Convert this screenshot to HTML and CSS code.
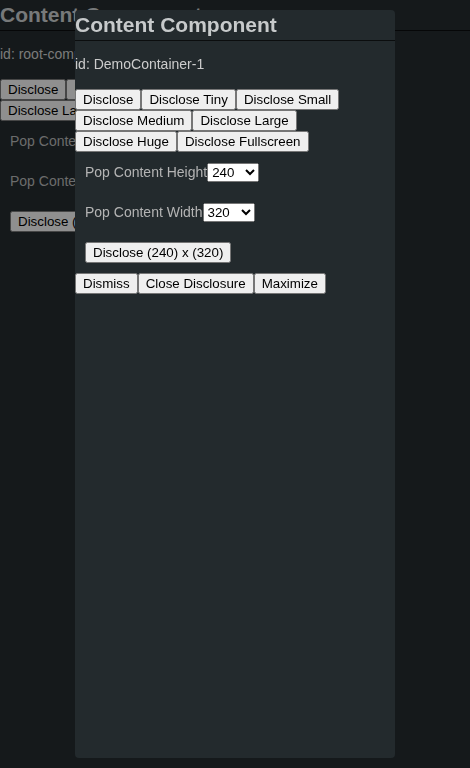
FILE: index.html
```html
<!DOCTYPE html>
<html>
<head>
<meta charset="utf-8">
<link rel="stylesheet" href="styles.css">
</head>
<body>
<div class="component">
  <h1 class="title">Content Component</h1>
  <p class="ident">id: root-component</p>
  <div class="buttons">
    <button>Disclose</button><button>Disclose Tiny</button><button>Disclose Small</button><button>Disclose Medium</button><button>Disclose Large</button><button>Disclose Huge</button><button>Disclose Fullscreen</button>
  </div>
  <div class="field"><span class="label">Pop Content Height</span><select><option>240</option><option>320</option><option>480</option></select></div>
  <div class="field"><span class="label">Pop Content Width</span><select><option>320</option><option>240</option><option>480</option></select></div>
  <div class="field"><button>Disclose (240) x (320)</button></div>
</div>
<div class="overlay">
  <div class="panel">
    <div class="component">
      <h2 class="title">Content Component</h2>
      <p class="ident">id: DemoContainer-1</p>
      <div class="buttons">
        <button>Disclose</button><button>Disclose Tiny</button><button>Disclose Small</button><button>Disclose Medium</button><button>Disclose Large</button><button>Disclose Huge</button><button>Disclose Fullscreen</button>
      </div>
      <div class="field"><span class="label">Pop Content Height</span><select><option>240</option><option>320</option><option>480</option></select></div>
      <div class="field"><span class="label">Pop Content Width</span><select><option>320</option><option>240</option><option>480</option></select></div>
      <div class="field"><button>Disclose (240) x (320)</button></div>
      <div class="buttons">
        <button>Dismiss</button><button>Close Disclosure</button><button>Maximize</button>
      </div>
    </div>
  </div>
</div>
</body>
</html>
```

FILE: styles.css
```css
html, body {
  margin: 0;
  padding: 0;
  height: 100%;
}
body {
  background: #232a2d;
  color: #cccccc;
  font-family: "Liberation Sans", Arial, sans-serif;
  font-size: 14px;
}
.title {
  margin: 0;
  padding: 3px 0;
  font-size: 21px;
  font-weight: bold;
  line-height: 24px;
  color: #c7cacb;
  border-bottom: 1px solid #0b0d0e;
}
.ident {
  margin: 15px 0 17px;
  line-height: 16px;
  color: #cccccc;
}
.buttons {
  display: flex;
  flex-wrap: wrap;
}
button, select {
  font-family: "Liberation Sans", Arial, sans-serif;
  font-size: 13.333px;
}
button {
  margin: 0;
}
select {
  width: 52px;
  height: 19px;
  margin: 0;
}
.field {
  display: flex;
  align-items: center;
  padding: 10px;
  min-height: 20px;
}
.label {
  color: #b4b4b4;
  line-height: 20px;
}
.overlay {
  position: fixed;
  inset: 0;
  background: rgba(0, 0, 0, 0.4);
  display: flex;
  justify-content: center;
  align-items: stretch;
  padding: 10px 0;
  box-sizing: border-box;
}
.panel {
  width: 320px;
  background: #232a2d;
  border-radius: 4px;
  overflow: hidden;
}
```
